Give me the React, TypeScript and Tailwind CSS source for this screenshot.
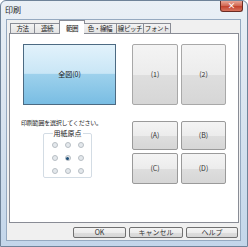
import React from "react";

const JP = "font-['Meiryo','Noto_Sans_CJK_JP',sans-serif]";

const TABS = [
  { label: "方法", w: "w-[25px]" },
  { label: "連続", w: "w-[25px]" },
  { label: "範囲", w: "w-[26px]", active: true },
  { label: "色・線幅", w: "w-[33px]" },
  { label: "線ピッチ", w: "w-[27px]" },
  { label: "フォント", w: "w-[27px]" },
];

const LIGHT = "border-[#a8a8a8] bg-[linear-gradient(to_bottom,#f3f3f3_0%,#ededed_50%,#e0e0e0_51%,#dadada_100%)]";

function GrayButton({ label, className = "" }: { label: string; className?: string }) {
  return (
    <button
      className={`flex items-center justify-center whitespace-nowrap rounded-[2px] border border-[#9a9a9a] bg-[linear-gradient(to_bottom,#f4f4f4_0%,#ececec_50%,#dedede_51%,#d6d6d6_100%)] text-[7px] leading-none text-[#333] ${className}`}
    >
      {label}
    </button>
  );
}

function Radio({ checked = false }: { checked?: boolean }) {
  return (
    <span className="flex h-[6px] w-[6px] items-center justify-center rounded-full border border-[#b8bec4] bg-[#e4e8ec]">
      {checked && <span className="h-[3px] w-[3px] rounded-full bg-[#1f4f78]" />}
    </span>
  );
}

export default function App() {
  return (
    <div className={`flex h-[247px] w-[248px] flex-col overflow-hidden rounded-t-[6px] border border-[#6f8399] bg-[linear-gradient(to_bottom,#eaf0f6,#dbe5f0_40%,#c3d6ea)] ${JP}`}>
      {/* title bar */}
      <div className="flex h-[18px] shrink-0 items-start">
        <span className="pl-[4px] pt-[4px] text-[8px] leading-[10px] text-[#222]">印刷</span>
        <button className="ml-auto mr-[4px] flex h-[11px] w-[23px] items-center justify-center rounded-b-[3px] border border-t-0 border-[#6b2c24] bg-[linear-gradient(to_bottom,#e9a696,#cf6550_50%,#c2412c_51%,#d8735e)] text-[8px] font-bold leading-none text-white">
          ×
        </button>
      </div>

      {/* client area */}
      <div className="ml-[5px] mr-[6px] flex h-[222px] flex-col border border-[#95a9c0] bg-[#f0f0f0] pl-[2px] pr-[1px]">
        {/* tabs */}
        <div className="relative z-10 -mb-px ml-[1px] flex h-[14px] items-end">
          {TABS.map((t) =>
            t.active ? (
              <div
                key={t.label}
                className={`${t.w} -mx-[1px] flex h-[14px] items-start justify-center whitespace-nowrap border border-b-0 border-[#898c95] bg-white pt-[3px] text-[6.5px] leading-[8px] tracking-[-0.4px] text-[#111]`}
              >
                {t.label}
              </div>
            ) : (
              <div
                key={t.label}
                className={`${t.w} flex h-[11px] items-center justify-center whitespace-nowrap border border-l-0 border-[#898c95] bg-[linear-gradient(to_bottom,#f3f3f3,#e3e3e3)] text-[6.5px] leading-none tracking-[-0.4px] text-[#222] first:border-l`}
              >
                {t.label}
              </div>
            )
          )}
        </div>

        {/* panel */}
        <div className="flex h-[190px] border border-[#898c95] bg-white pl-[13px] pt-[10px]">
          <div className="flex w-[93px] flex-col">
            <button className="flex h-[61px] items-center justify-center border border-[#4c6a82] bg-[linear-gradient(to_bottom,#e2f2fb_0%,#c9e6f6_48%,#9dd1ec_50%,#79bde3_100%)] text-[7px] text-[#222]">
              全図(0)
            </button>
            <p className="-ml-[2px] mt-[14px] whitespace-nowrap text-[6px] leading-[8px] tracking-[-0.2px] text-[#222]">
              印刷範囲を選択してください。
            </p>
            <fieldset className="ml-[20px] mt-[3px] h-[48px] w-[49px] rounded-[2px] border border-[#d3dce4] px-[4px]">
              <legend className="mx-auto px-[1px] text-[7px] leading-[7px] text-[#222]">用紙原点</legend>
              <div className="grid grid-cols-3 justify-items-center gap-y-[7px] pt-[5px]">
                <Radio />
                <Radio />
                <Radio />
                <Radio />
                <Radio checked />
                <Radio />
                <Radio />
                <Radio />
                <Radio />
              </div>
            </fieldset>
          </div>

          <div className="ml-[16px] flex flex-col">
            <div className="grid h-[61px] grid-cols-[46px_45px] gap-x-[3px]">
              <GrayButton label="(1)" className={LIGHT} />
              <GrayButton label="(2)" className={LIGHT} />
            </div>
            <div className="mt-[16px] grid grid-cols-[46px_45px] grid-rows-[29px_31px] gap-[3px]">
              <GrayButton label="(A)" />
              <GrayButton label="(B)" />
              <GrayButton label="(C)" />
              <GrayButton label="(D)" />
            </div>
          </div>
        </div>

        {/* footer */}
        <div className="mt-[4px] flex justify-end gap-[3px] pr-[1px]">
          <GrayButton label="OK" className="h-[11px] w-[53px] border-[#707070]" />
          <GrayButton label="キャンセル" className="h-[11px] w-[54px] border-[#707070]" />
          <GrayButton label="ヘルプ" className="h-[11px] w-[52px] border-[#707070]" />
        </div>
      </div>
    </div>
  );
}
